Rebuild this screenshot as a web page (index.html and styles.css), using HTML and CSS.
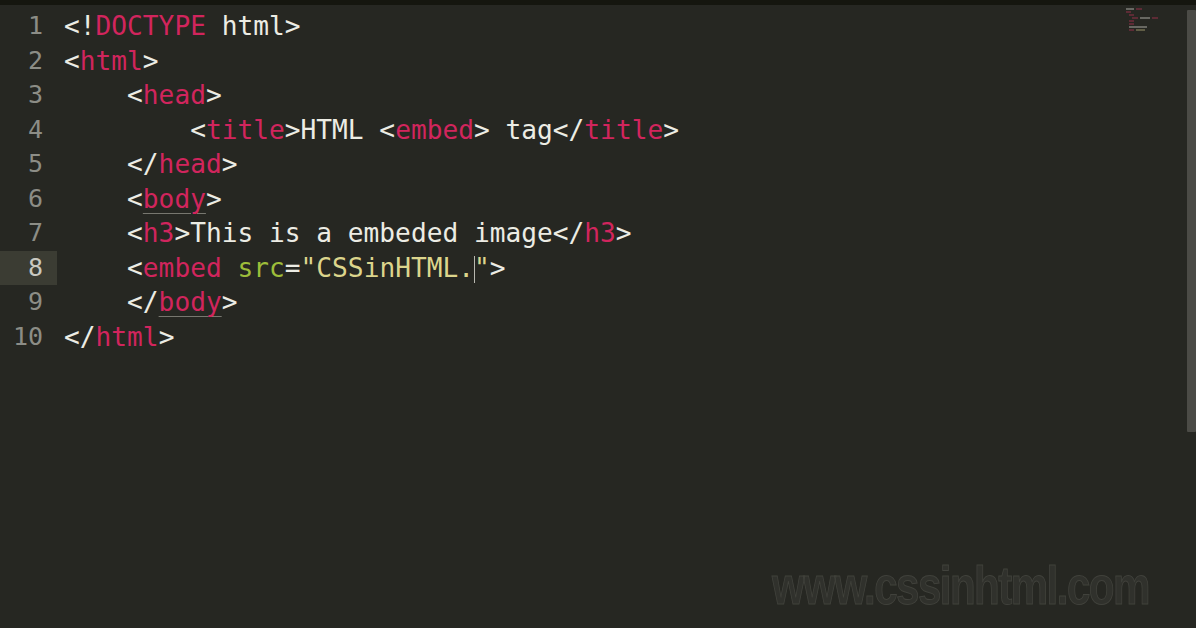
FILE: index.html
```html
<!DOCTYPE html>
<html>
<head>
<meta charset="utf-8">
<link rel="stylesheet" href="styles.css">
</head>
<body>
<div class="window">
  <div class="topbar"></div>
  <div class="editor">
    <div class="gutter">
      <div class="ln">1</div>
      <div class="ln">2</div>
      <div class="ln">3</div>
      <div class="ln">4</div>
      <div class="ln">5</div>
      <div class="ln">6</div>
      <div class="ln">7</div>
      <div class="ln active">8</div>
      <div class="ln">9</div>
      <div class="ln">10</div>
    </div>
    <div class="code">
      <div class="line">&lt;!<span class="t">DOCTYPE</span> html&gt;</div>
      <div class="line">&lt;<span class="t">html</span>&gt;</div>
      <div class="line">    &lt;<span class="t">head</span>&gt;</div>
      <div class="line">        &lt;<span class="t">title</span>&gt;HTML &lt;<span class="t">embed</span>&gt; tag&lt;/<span class="t">title</span>&gt;</div>
      <div class="line">    &lt;/<span class="t">head</span>&gt;</div>
      <div class="line">    &lt;<span class="t u">body</span>&gt;</div>
      <div class="line">    &lt;<span class="t">h3</span>&gt;This is a embeded image&lt;/<span class="t">h3</span>&gt;</div>
      <div class="line">    &lt;<span class="t">embed</span> <span class="a">src</span>=<span class="s">"CSSinHTML.<span class="caret"></span>"</span>&gt;</div>
      <div class="line">    &lt;/<span class="t u">body</span>&gt;</div>
      <div class="line">&lt;/<span class="t">html</span>&gt;</div>
    </div>
    <div class="scrollbar"><div class="thumb"></div></div>
  </div>
  <div class="minimap">
    <div class="mm"><i class="w" style="width:8px"></i><i class="p" style="width:6px"></i></div>
    <div class="mm"><i class="p" style="width:5px"></i></div>
    <div class="mm in1"><i class="p" style="width:5px"></i></div>
    <div class="mm in2"><i class="p" style="width:6px"></i><i class="w" style="width:10px"></i><i class="p" style="width:6px"></i></div>
    <div class="mm in1"><i class="p" style="width:5px"></i></div>
    <div class="mm in1"><i class="p" style="width:5px"></i></div>
    <div class="mm in1"><i class="w" style="width:18px"></i></div>
    <div class="mm in1"><i class="p" style="width:5px"></i><i class="y" style="width:9px"></i></div>
  </div>
  <div class="watermark">www.cssinhtml.com</div>
</div>
</body>
</html>
```

FILE: styles.css
```css
html, body {
  margin: 0;
  padding: 0;
  background: #262722;
}
.window {
  position: relative;
  width: 1196px;
  height: 628px;
  overflow: hidden;
  background: #262722;
  display: flex;
  flex-direction: column;
}
.topbar {
  height: 5px;
  background: #15160f;
  flex: none;
}
.editor {
  display: flex;
  flex: 1;
  padding-top: 4px;
}
.gutter {
  width: 57px;
  flex: none;
  display: flex;
  flex-direction: column;
}
.ln {
  height: 34.5px;
  line-height: 34.5px;
  padding-right: 14px;
  text-align: right;
  font-family: "DejaVu Sans Mono", monospace;
  font-size: 25px;
  color: #8c8d86;
}
.ln.active {
  background: #3b3c33;
  color: #c8c8c0;
}
.code {
  flex: 1;
  padding-left: 7px;
  font-family: "DejaVu Sans Mono", monospace;
  font-size: 26.2px;
  color: #ecece4;
}
.line {
  height: 34.5px;
  line-height: 34.5px;
  white-space: pre;
}
.t { color: #d1255d; }
.a { color: #9dbd3a; }
.s { color: #dcd58c; }
.u {
  text-decoration: underline;
  text-decoration-color: #77776f;
  text-underline-offset: 5px;
  text-decoration-thickness: 1px;
}
.caret {
  display: inline-block;
  width: 1px;
  height: 27px;
  margin-right: -1px;
  vertical-align: -6px;
  background: #b8b8b0;
}
.scrollbar {
  width: 9px;
  flex: none;
  margin-top: 1px;
}
.thumb {
  height: 422px;
  background: #4b4b46;
  border-radius: 1px;
}
.minimap {
  position: absolute;
  top: 8px;
  left: 1126px;
  width: 40px;
  display: flex;
  flex-direction: column;
  gap: 1px;
  opacity: 0.45;
  filter: blur(0.6px);
}
.mm {
  height: 2px;
  display: flex;
  gap: 2px;
}
.mm i { display: block; height: 2px; }
.mm .w { background: #b8b8b0; }
.mm .p { background: #a0304e; }
.mm .y { background: #a8a070; }
.mm.in1 { padding-left: 3px; }
.mm.in2 { padding-left: 6px; }
.watermark {
  position: absolute;
  left: 772px;
  top: 554px;
  font-family: "Liberation Sans", Arial, sans-serif;
  font-weight: bold;
  font-size: 54px;
  letter-spacing: -2px;
  color: #30312c;
  -webkit-text-stroke: 1px #41423c;
  transform-origin: left top;
  transform: scaleX(0.78);
}
```
